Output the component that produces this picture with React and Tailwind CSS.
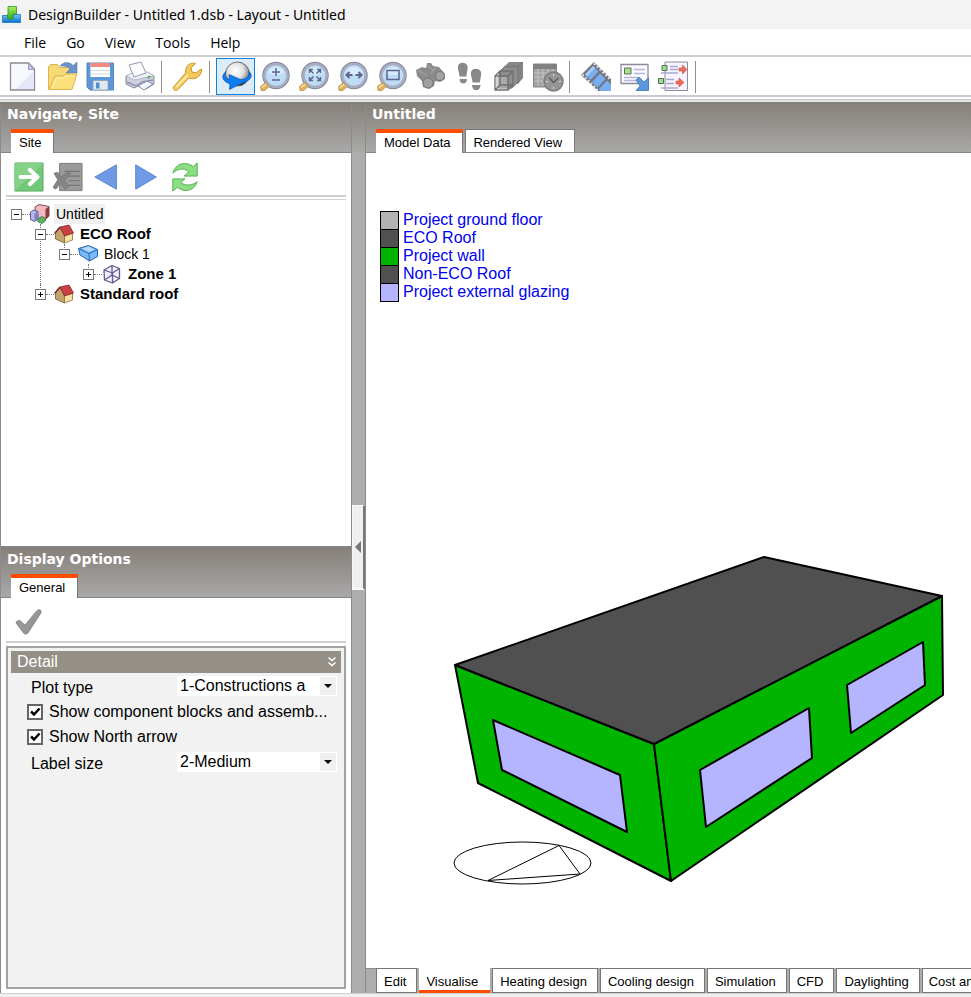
import { useState } from "react";

const sans = "font-['Liberation_Sans',Arial,sans-serif]";

export default function App() {
  return (
    <div className={`flex h-screen flex-col overflow-hidden bg-[#f0f0f0] text-black ${sans}`}>
      <TitleBar />
      <MenuBar />
      <Toolbar />
      <main className="flex min-h-0 flex-1">
        <aside className="flex w-[352px] shrink-0 flex-col border-x border-[#8c8c8c] bg-white">
          <NavigatePanel />
          <DisplayOptions />
        </aside>
        <Splitter />
        <ModelView />
      </main>
      <footer className="h-1 shrink-0 border-t border-[#d0d0d0] bg-[#f0f0f0]" />
    </div>
  );
}

function TitleBar() {
  return (
    <header className="flex h-[29px] shrink-0 items-center bg-[#f3f3f3] font-['Noto_Sans','Open_Sans',sans-serif]">
      <svg viewBox="0 0 20 18" className="ml-0.5 h-[18px] w-5">
        <defs>
          <linearGradient id="logoGreen" x1="0" y1="0" x2="0" y2="1">
            <stop offset="0" stopColor="#a5f05a" />
            <stop offset="1" stopColor="#35a91f" />
          </linearGradient>
          <linearGradient id="logoBlue" x1="0" y1="0" x2="0" y2="1">
            <stop offset="0" stopColor="#6fc8fb" />
            <stop offset="1" stopColor="#0a6fd0" />
          </linearGradient>
        </defs>
        <path d="M.5 9.500h7v3h4v-4h7v8H.5z" fill="url(#logoBlue)" stroke="#1675bd" strokeWidth=".8" />
        <path d="M6 .5h8.500v7.500H11v5H5.500V8.500H6z" fill="url(#logoGreen)" stroke="#35951f" strokeWidth=".8" />
      </svg>
      <h1 className="ml-1.5 whitespace-nowrap text-[14px] leading-5">DesignBuilder - Untitled 1.dsb - Layout - Untitled</h1>
    </header>
  );
}

function MenuBar() {
  const items = ["File", "Go", "View", "Tools", "Help"];
  return (
    <nav className="flex h-[26px] shrink-0 items-center gap-5 bg-white pl-6 pt-0.5 font-['Open_Sans','Noto_Sans',sans-serif] text-[14px] leading-5">
      {items.map((item) => (
        <button key={item} type="button">{item}</button>
      ))}
    </nav>
  );
}

function Toolbar() {
  return (
    <div className="shrink-0 border-t-2 border-[#cfcfd1] bg-white">
      <div className="flex h-10 items-center border-b-2 border-[#c9c9ce] pl-[3px] pt-px">
        <Tool label="New"><NewIcon /></Tool>
        <Tool label="Open"><OpenIcon /></Tool>
        <Tool label="Save"><SaveIcon /></Tool>
        <Tool label="Print"><PrintIcon /></Tool>
        <Separator />
        <Tool label="Options"><WrenchIcon /></Tool>
        <Separator />
        <Tool label="Orbit" active><OrbitIcon /></Tool>
        <Tool label="Zoom in and out">
          <Magnifier><path d="M17 7v8M13 11h8M13 19h8" /></Magnifier>
        </Tool>
        <Tool label="Fit view">
          <Magnifier><path d="M15.500 12.500l-4-4m0 3.500V8.500h3.500M18.500 12.500l4-4m-3.500 0h3.500V12M15.500 15.500l-4 4m0-3.500v3.500h3.500M18.500 15.500l4 4m-3.500 0h3.500V16" /></Magnifier>
        </Tool>
        <Tool label="Pan">
          <Magnifier><path d="M9.500 14h6M12.500 11l-3 3 3 3M24.500 14h-6M21.500 11l3 3-3 3" strokeWidth="2" /></Magnifier>
        </Tool>
        <Tool label="Zoom window">
          <Magnifier><path d="M11 9.500h12v9H11z" /></Magnifier>
        </Tool>
        <Tool label="Find"><BinocularsIcon /></Tool>
        <Tool label="Walk"><FeetIcon /></Tool>
        <Tool label="Blocks"><BlocksIcon /></Tool>
        <Tool label="Schedule"><ScheduleIcon /></Tool>
        <Separator />
        <Tool label="Movie"><FilmIcon /></Tool>
        <Tool label="Export"><ExportIcon /></Tool>
        <Tool label="Mapping"><MappingIcon /></Tool>
        <Separator />
      </div>
      <div className="mt-0.5 h-[3px] border-t border-[#c9c9ce] bg-[#e4e4e6]" />
    </div>
  );
}

function Tool({ label, active, children }) {
  return (
    <button
      type="button"
      aria-label={label}
      className={
        active
          ? "flex h-[37px] w-[39px] items-center justify-center border border-[#0a84e8] bg-[#dcebf8]"
          : "flex h-[37px] w-[39px] items-center justify-center"
      }
    >
      {children}
    </button>
  );
}

function Separator() {
  return <span className="ml-0.5 mr-1.5 h-8 w-px bg-[#8f8f8f]" />;
}

function Icon({ children }) {
  return <svg viewBox="0 0 32 32" className="h-8 w-8 shrink-0" fill="none">{children}</svg>;
}

function NewIcon() {
  return (
    <Icon>
      <path d="M3.500 2h18l6 6v21h-24z" fill="#f7f7fe" stroke="#8b8b93" strokeWidth="1.300" />
      <path d="M9 28L27 10v18z" fill="#e6e6fa" />
      <path d="M21.500 2l6 6.500h-6z" fill="#c3bdf0" stroke="#9b98b8" />
    </Icon>
  );
}

function OpenIcon() {
  return (
    <Icon>
      <path d="M2.500 28V6l2-2.500h7l2 3h10V14L8 28z" fill="#f7d978" stroke="#dfb347" />
      <path d="M14 5c4-5 10-4 13-.5L31 1v11H20l4-4c-3-3-6-3-10-3z" fill="#6b93c9" stroke="#587bb0" strokeWidth=".6" />
      <path d="M3 28.500L9 15h8l2-2h12l-5 15.500z" fill="#fbe07a" stroke="#dfb347" />
      <path d="M6 27l4-10h8l2-2h9" stroke="#fff2b5" />
    </Icon>
  );
}

function SaveIcon() {
  return (
    <Icon>
      <path d="M2 2h26.500v27H5l-3-3z" fill="#5c97da" stroke="#5a83b8" />
      <path d="M5.500 2h19.500v14H5.500z" fill="#fff" />
      <path d="M5.500 2h19.500v4H5.500z" fill="#f08a82" />
      <path d="M5.500 9.500h19.500M5.500 13h19.500" stroke="#d5d8de" />
      <path d="M8 19.500h15V29H8z" fill="#e3e8ef" stroke="#8799b3" strokeWidth=".7" />
      <path d="M11 21.500h3.500v6H11z" fill="#4f8cd0" />
    </Icon>
  );
}

function PrintIcon() {
  return (
    <Icon>
      <path d="M2 15l8-3h15l5 3v8l-8 5-8-3-4 2-8-4z" fill="#cfd0e2" stroke="#85869f" />
      <path d="M2 15l9 4 8-2 11-2-6-4H10z" fill="#f0f0f9" stroke="#a3a4ba" strokeWidth=".7" />
      <path d="M5 4l12-3 5 11-12 4z" fill="#fcfcff" stroke="#9697b0" />
      <path d="M3 21l9 4 6-4 11-2" stroke="#9293ab" strokeWidth="1.500" />
      <path d="M14 25l9-5 6 3-9 6z" fill="#f5f7ff" stroke="#7b8eb4" />
      <path d="M23 16l3-1.500 1 1.500-3 2z" fill="#55b655" />
    </Icon>
  );
}

function WrenchIcon() {
  return (
    <Icon>
      <path d="M1.500 26c-1 2 1.500 4.500 4 3L17 17c5 2 11 0 13-8l-1-1-5 4-4-1-1-4 4.500-4.500C19 1 13 4 13.500 12z" fill="#f6c95a" stroke="#cb962d" strokeLinejoin="round" />
      <path d="M4 26L16 14" stroke="#fde9a6" strokeWidth="2" />
    </Icon>
  );
}

function OrbitIcon() {
  return (
    <Icon>
      <defs>
        <radialGradient id="ball" cx=".42" cy=".36" r=".65">
          <stop offset="0" stopColor="#fff" />
          <stop offset=".5" stopColor="#e4e4e4" />
          <stop offset=".8" stopColor="#999" />
          <stop offset="1" stopColor="#222" />
        </radialGradient>
      </defs>
      <circle cx="17.500" cy="13" r="12" fill="url(#ball)" stroke="#555" strokeWidth=".8" />
      <path d="M6 10.500c-5 4-4.500 9.500 4 12.500l-.5 5.500L23 21.500c8-2 10.500-7 6-11 1.500 5-2.500 7.500-8.500 8L9 13.500l.5 5C5 17 3.500 14 6 10.500z" fill="#0c7df0" stroke="#0a57b0" strokeWidth=".7" />
    </Icon>
  );
}

function Magnifier({ children }) {
  return (
    <Icon>
      <circle cx="17" cy="14.500" r="13" fill="#bfdcf7" stroke="#83879b" strokeWidth="1.500" />
      <circle cx="17" cy="14.500" r="11.600" stroke="#a7adbf" strokeWidth="2.500" />
      <path d="M9 11a9 9 0 0 1 16 0c-4 4-12 4-16 0z" fill="#d7ebfd" />
      <path d="M1.500 25.500l5-4 4 3.500-4.500 4.500H2z" fill="#dfb162" stroke="#b28a43" strokeWidth=".7" />
      <path d="M3 26.500l4-3" stroke="#fbe3a3" strokeWidth="1.500" />
      <g stroke="#5e6690" strokeWidth="1.500">{children}</g>
    </Icon>
  );
}

function BinocularsIcon() {
  return (
    <Icon>
      <path d="M1 9l6-3 4 1 1-5h4l2 3 6 1 6 7v5l-5 3-5-1-1 5-5 3-6-2-1-6-5-5z" fill="#8a8a8a" />
      <path d="M3 9.500l9 5M12 4l7 6M20 7l-4 6" stroke="#9d9d9d" strokeWidth="1.500" />
      <circle cx="13" cy="22" r="5" fill="#a0a0a0" stroke="#767676" />
      <circle cx="25" cy="15" r="4.500" fill="#a2a2a2" stroke="#767676" />
    </Icon>
  );
}

function FeetIcon() {
  return (
    <Icon>
      <g fill="#888">
        <path d="M4 5c1-4.500 8-4.500 9.500 0 .5 4-1 7-1 10.500h-7C5.500 12 3.500 9 4 5zM5.500 18h7.500c0 6-7.500 6-7.500 0z" />
        <path d="M17 11c1-4.500 8.500-4.500 10 0 .5 4-1 7-1 10.500h-7.500c0-3.500-2-6.500-1.500-10.500zM18 24h8.500c0 7-8.500 7-8.500 0z" />
      </g>
    </Icon>
  );
}

function BlocksIcon() {
  return (
    <Icon>
      <path d="M11 6l5-5h14v16l-5 6H11z" fill="#858585" />
      <path d="M11 6h14v15M25 6l5-5" stroke="#707070" />
      <path d="M6 11l5-5h14v15l-6 6H6z" fill="#8e8e8e" stroke="#787878" />
      <path d="M3 16h11v12H3z" fill="#bdbdbd" fillOpacity=".6" />
      <path d="M2 15h13v14H2zM2 15l5-5h13v14l-5 5M15 15l5-5M7 10v14h13M7 24l-5 5" stroke="#707070" strokeWidth="1.300" />
    </Icon>
  );
}

function ScheduleIcon() {
  return (
    <Icon>
      <path d="M1.500 3h23v23h-23z" fill="#a3a3a3" stroke="#858585" />
      <path d="M2 3h22v5H2z" fill="#818181" />
      <path d="M2 12h22M2 16h22M2 20h22M6 8v17M11 8v17M16 8v17M21 8v17" stroke="#c3c3c3" />
      <circle cx="21.500" cy="20.500" r="9.500" fill="#969696" stroke="#7c7c7c" strokeWidth="1.500" />
      <path d="M17 16.500l4.500 5 5-4.500" stroke="#5c5c5c" strokeWidth="1.300" />
      <path d="M21.500 13v2M21.500 26v2M14 20.500h2M27 20.500h2" stroke="#ddd" />
    </Icon>
  );
}

function FilmIcon() {
  return (
    <Icon>
      <path d="M1 14L14 1l17 17v12H18z" fill="#72757f" />
      <path d="M5 13.500l8-8.500 5.500 5.500-8 8.500zM12 21l8-8.500 5.500 5.500-8 8.500zM19 28l8-8.500 4 4V30H21z" fill="#78aef0" />
      <path d="M5 13.500l8-8.500 2 2-8 8.500z" fill="#a9cbf8" />
      <path d="M2.500 13.500L18.500 30M14 2.500L31 19.500" stroke="#eee" strokeWidth="1.800" strokeDasharray="1.800 2.200" />
    </Icon>
  );
}

function ExportIcon() {
  return (
    <Icon>
      <path d="M2 3.500h27v19H2z" fill="#fbfbff" stroke="#8b8b9c" strokeWidth="1.300" />
      <path d="M5.500 7h6.500v6H5.500z" fill="#a5e28b" stroke="#5f6c61" />
      <path d="M15 8.500h11M15 12.500h11M5 16.500h14M5 19.500h12" stroke="#b8b5dc" strokeWidth="1.300" />
      <path d="M17 19l3-3 5 5 4.500-4.500V29.500H17l4-4.500z" fill="#5a97dc" stroke="#4272af" strokeWidth=".8" />
    </Icon>
  );
}

function MappingIcon() {
  return (
    <Icon>
      <path d="M7 1h22.500v28.500H7z" fill="#f5f4ff" stroke="#8c8c9e" />
      <path d="M12 5.500h8M12 8.500h8M3 12h17M8 18.500h8M8 22.500h8M3 27h17" stroke="#aaa8ce" strokeWidth="1.300" />
      <path d="M4 4.500h5v5H4zM.5 17.500h5v5h-5z" fill="#9edd8b" stroke="#55705a" />
      <path d="M21 7h3.500V4l4.500 4.500-4.500 4.500v-3H21zM18 20h3v-3l5 4.500-5 4.500v-3h-3z" fill="#ef6a5c" stroke="#c84b40" strokeWidth=".6" />
    </Icon>
  );
}

function PanelHeader({ title, children }) {
  return (
    <div className="flex h-[51px] shrink-0 flex-col justify-between border-b border-[#858585] bg-linear-to-b from-[#857f79] to-[#a9a9a8]">
      <h2 className="pl-1.5 pt-0.5 font-['DejaVu_Sans',Verdana,sans-serif] text-[14px] font-bold leading-5 text-white">{title}</h2>
      <div role="tablist" className="-mb-px flex items-end gap-0.5 pl-2.5">{children}</div>
    </div>
  );
}

function TopTab({ selected, children }) {
  return (
    <button
      type="button"
      role="tab"
      aria-selected={selected}
      className={
        selected
          ? "h-6 border-r border-t-4 border-r-[#777] border-t-[#ff4d00] bg-white pl-2 pr-3 text-[13px] leading-5"
          : "mb-px h-[23px] border border-b-0 border-[#777] bg-white pl-[7px] pr-3 pt-1 text-[13px] leading-[18px]"
      }
    >
      {children}
    </button>
  );
}

function NavigatePanel() {
  return (
    <section className="flex min-h-0 flex-1 flex-col">
      <PanelHeader title="Navigate, Site">
        <TopTab selected>Site</TopTab>
      </PanelHeader>
      <div className="mx-[5px] flex h-[44px] shrink-0 items-end border-b-2 border-[#cfcfd4] pb-0.5">
        <NavTool label="Go to">
          <path d="M1 1h30v30H1z" fill="#72c878" stroke="#5bab63" />
          <path d="M1 1h30L1 31z" fill="#93da95" fillOpacity=".6" />
          <path d="M7 16h17M17 8.500l8 7.500-8 7.500" stroke="#fff" strokeWidth="4.500" strokeLinecap="round" strokeLinejoin="round" />
        </NavTool>
        <NavTool label="Delete">
          <path d="M7 1.500h24v29H7z" fill="#9a9a9a" stroke="#7c7c7c" />
          <path d="M12 10h17M16 15h13M17 20h12M16 25h13" stroke="#757575" strokeWidth="1.300" />
          <path d="M1 12l4-1 4 5 6-5 4 1-7 8 5 6-4 3-5-6-5 6-3-2 5-8z" fill="#858585" stroke="#707070" strokeWidth=".7" />
        </NavTool>
        <NavTool label="Back"><path d="M26 3v26L3 16z" fill="#6f9be6" stroke="#5b83cc" /></NavTool>
        <NavTool label="Forward"><path d="M5 3v26l22-13z" fill="#6f9be6" stroke="#5b83cc" /></NavTool>
        <NavTool label="Refresh">
          <path d="M3 12C6 1 17-1 25 5l4-4v14H15l5-4.500C14 5 7 8 3 12z" fill="#8bdf82" stroke="#51ad50" />
          <path d="M29 21c-3 10-14 12-21 6l-5 4V18h13l-4.500 4C17 26 24 25 29 21z" fill="#8bdf82" stroke="#51ad50" />
        </NavTool>
      </div>
      <div className="mx-[5px] mt-0.5 h-px shrink-0 bg-[#cfcfd4]" />
      <ul className="min-h-0 flex-1 overflow-auto pl-2.5 pt-1 text-[14px] leading-5">
        <TreeItem label="Untitled" icon={<SiteIcon />} highlight last root>
          <TreeItem label="ECO Roof" icon={<HouseIcon />} bold>
            <TreeItem label="Block 1" icon={<BlockIcon />} last>
              <TreeItem label="Zone 1" icon={<ZoneIcon />} bold closed last />
            </TreeItem>
          </TreeItem>
          <TreeItem label="Standard roof" icon={<HouseIcon />} bold closed last />
        </TreeItem>
      </ul>
    </section>
  );
}

function NavTool({ label, children }) {
  return (
    <button type="button" aria-label={label} className="flex h-8 w-[39px] items-center pl-2">
      <svg viewBox="0 0 32 32" className="h-[30px] w-[30px] shrink-0" fill="none">{children}</svg>
    </button>
  );
}

function TreeItem({ label, icon, bold, highlight, closed, last, root, children }) {
  const [open, setOpen] = useState(!closed);
  return (
    <li className="relative">
      {!root && (
        <span className={last ? "absolute left-[5px] top-0 h-2.5 border-l border-dotted border-[#777]" : "absolute left-[5px] top-0 h-full border-l border-dotted border-[#777]"} />
      )}
      <div className="relative flex h-5 items-center">
        <button
          type="button"
          aria-label={`Toggle ${label}`}
          aria-expanded={open}
          onClick={() => setOpen(!open)}
          className="h-[11px] w-[11px] border border-[#777] bg-white"
        >
          <svg viewBox="0 0 9 9" className="h-[9px] w-[9px]" stroke="#000">
            <path d={open ? "M2 4.500h5" : "M2 4.500h5M4.500 2v5"} />
          </svg>
        </button>
        <span className="w-2 border-t border-dotted border-[#777]" />
        {icon}
        <span
          className={
            bold
              ? "ml-1.5 text-[15px] font-bold"
              : highlight
                ? "ml-1 bg-[#f0f0f0] px-0.5"
                : "ml-1.5"
          }
        >
          {label}
        </span>
      </div>
      {open && children && <ul className="pl-6">{children}</ul>}
    </li>
  );
}

function SiteIcon() {
  return (
    <svg viewBox="0 0 20 20" className="h-5 w-5" fill="none">
      <path d="M5 3l4-2.500 10 2V12l-4 4-9-2z" fill="#f2b9bc" stroke="#7d4a50" />
      <path d="M15.500 5L19 2.500V12l-3.500 4z" fill="#8c3d42" />
      <path d="M.5 8l3-2 4.500 1.500v8l-3.500 2-4-2z" fill="#b6b8ee" stroke="#565a91" />
      <path d="M4.500 9.500L8 7.500v8l-3.500 2z" fill="#7d80c4" />
      <path d="M8 14.500l4-2 3.500 1.500v3L12 19.500 8 18z" fill="#5cae63" stroke="#38793f" strokeWidth=".7" />
    </svg>
  );
}

function HouseIcon() {
  return (
    <svg viewBox="0 0 20 20" className="h-5 w-5" fill="none">
      <path d="M1.500 9L6 4l4.500 7v8l-9-4z" fill="#c5a36c" stroke="#6f5a3a" strokeWidth=".8" />
      <path d="M10.500 11l8-2v7l-8 3z" fill="#f8e0a0" stroke="#8d6e3d" strokeWidth=".8" />
      <path d="M6 3l9-2 4.500 8-9 3z" fill="#cc3f42" stroke="#7e282b" strokeWidth=".8" />
      <path d="M6 3L.5 9.500" stroke="#7e282b" strokeWidth="1.500" />
    </svg>
  );
}

function BlockIcon() {
  return (
    <svg viewBox="0 0 20 20" className="h-5 w-5" fill="#79b9f8" stroke="#2b65ad" strokeLinejoin="round">
      <path d="M.5 4.500l10-3 9 4v7l-8 4.500L2 11z" />
      <path d="M.5 4.500l10.500 5 8.500-4M11 9.500l.5 7.500" fill="none" />
      <path d="M4 4.500l6.500-2 6 3-5.500 2.500z" fill="#b5dcff" stroke="none" />
    </svg>
  );
}

function ZoneIcon() {
  return (
    <svg viewBox="0 0 20 20" className="h-5 w-5" fill="#f1f0ff" stroke="#5e5a8b" strokeWidth="1.300" strokeLinejoin="round">
      <path d="M2 6l8-4.500 7.500 3v10l-7 4.500-8-3z" />
      <path d="M2 6l8.500 3 7-4.500M10.500 9v10M10 1.500V11l-7.500 5M10 11l7.500 3.500" fill="none" />
    </svg>
  );
}

function DisplayOptions() {
  return (
    <section className="flex h-[447px] shrink-0 flex-col border-t border-[#858585]">
      <PanelHeader title="Display Options">
        <TopTab selected>General</TopTab>
      </PanelHeader>
      <div className="mx-[5px] flex h-[45px] shrink-0 items-end border-b-2 border-[#cdd0d2] pb-[5px]">
        <button type="button" aria-label="Apply" className="ml-[9px]">
          <svg viewBox="0 0 28 28" className="block h-7 w-7">
            <path d="M1 15l1-2 3-.5 5 4.500L21.500 3c2-2.500 6-1 4.500 2L13 25c-1 1.500-3.500 1.500-4.500 0z" fill="#969696" stroke="#808080" strokeWidth=".7" />
          </svg>
        </button>
      </div>
      <div className="mx-[5px] mb-1 mt-[3px] min-h-0 flex-1 border-2 border-[#a3a3a3] bg-[#f2f2f2] p-[3px] text-[16px] leading-5">
        <button type="button" className="flex h-[22px] w-full items-center justify-between bg-[#949088] pl-1.5 pr-1 text-white">
          <span>Detail</span>
          <svg viewBox="0 0 10 12" className="h-3 w-2.5" fill="none" stroke="#fff" strokeWidth="1.500">
            <path d="M1.500 1.500L5 4.500l3.500-3M1.500 6.500L5 9.500l3.500-3" />
          </svg>
        </button>
        <SelectRow id="plotType" label="Plot type" value="1-Constructions a" />
        <CheckRow id="components" label="Show component blocks and assemb..." />
        <CheckRow id="north" label="Show North arrow" />
        <SelectRow id="labelSize" label="Label size" value="2-Medium" />
      </div>
    </section>
  );
}

function SelectRow({ id, label, value }) {
  return (
    <div className="flex h-[26px] items-center pl-5 pr-1">
      <label htmlFor={id} className="w-[146px] pt-1">{label}</label>
      <div className="relative min-w-0 flex-1">
        <select id={id} className="block h-5 w-full appearance-none bg-white pl-[3px] pr-6 leading-5">
          <option>{value}</option>
        </select>
        <span className="pointer-events-none absolute right-px top-px flex h-[18px] w-4 items-center justify-center bg-[#f0f0f0]">
          <svg viewBox="0 0 8 4" className="h-1 w-2"><path d="M0 0h8L4 4z" /></svg>
        </span>
      </div>
    </div>
  );
}

function CheckRow({ id, label }) {
  return (
    <div className="flex h-[25px] items-center pl-4">
      <span className="relative h-4 w-4 shrink-0">
        <input id={id} type="checkbox" defaultChecked className="peer block h-4 w-4 appearance-none border-2 border-[#666] bg-white" />
        <svg viewBox="0 0 16 16" className="pointer-events-none absolute inset-0 hidden h-4 w-4 peer-checked:block" fill="none" stroke="#000" strokeWidth="2.500">
          <path d="M4 7.500l3 3 5.500-6" />
        </svg>
      </span>
      <label htmlFor={id} className="ml-1.5 whitespace-nowrap">{label}</label>
    </div>
  );
}

function Splitter() {
  return (
    <div className="flex w-[14px] shrink-0 flex-col justify-center border-r border-[#8c8c8c] bg-[linear-gradient(to_bottom,#857f79_0,#a9a9a8_50px,#adadad_50px)]">
      <button type="button" aria-label="Collapse panel" className="flex h-[85px] items-center justify-center border border-b-2 border-r-2 border-[#f8f8f8] border-r-[#777] bg-[#efefef]">
        <svg viewBox="0 0 6 12" className="h-3 w-1.5" fill="#777"><path d="M6 0v12L0 6z" /></svg>
      </button>
    </div>
  );
}

const legend = [
  { label: "Project ground floor", color: "bg-[#b3b3b3]" },
  { label: "ECO Roof", color: "bg-[#505050]" },
  { label: "Project wall", color: "bg-[#00b400]" },
  { label: "Non-ECO Roof", color: "bg-[#505050]" },
  { label: "Project external glazing", color: "bg-[#b4b4ff]" },
];

function ModelView() {
  return (
    <section className="flex min-w-0 flex-1 flex-col bg-white">
      <PanelHeader title="Untitled">
        <TopTab selected>Model Data</TopTab>
        <TopTab>Rendered View</TopTab>
      </PanelHeader>
      <div className="min-h-0 flex-1 overflow-hidden pl-3.5 pt-[58px]">
        <ul className="text-[16px] leading-[18px] text-[#0000f0]">
          {legend.map((item) => (
            <li key={item.label} className="flex h-[18px] items-center">
              <span className={`h-[19px] w-[19px] shrink-0 border border-black ${item.color}`} />
              <span className="ml-1">{item.label}</span>
            </li>
          ))}
        </ul>
        <Building />
      </div>
      <BottomTabs />
    </section>
  );
}

function Building() {
  return (
    <svg viewBox="452 555 494 331" className="ml-[72px] mt-[254px] h-[331px] w-[494px]" stroke="#000" strokeWidth="2" strokeLinejoin="round">
      <path d="M455 665L654 744L671 881L478 783z" fill="#00b400" />
      <path d="M654 744L942 596L943 695L671 881z" fill="#00b400" />
      <path d="M455 665L764 557L942 596L654 744z" fill="#505050" />
      <g fill="#b4b4ff">
        <path d="M493 720L620 775L627 832L502 770z" />
        <path d="M700 770L809 708L812 758L706 827z" />
        <path d="M847 685L923 642L925 685L851 733z" />
      </g>
      {/* north arrow */}
      <g fill="none" strokeWidth="1">
        <ellipse cx="522.500" cy="863" rx="68.500" ry="21" />
        <path d="M559 845.500L580 874L488 880.500z" />
      </g>
    </svg>
  );
}

function BottomTabs() {
  const tabs = ["Edit", "Visualise", "Heating design", "Cooling design", "Simulation", "CFD", "Daylighting", "Cost an"];
  return (
    <div className="flex h-[25px] shrink-0 overflow-hidden bg-[#adadad] text-[13px]">
      <div className="w-2.5 shrink-0 border-t border-[#8c8c8c]" />
      <div role="tablist" className="flex flex-1 gap-0.5">
        {tabs.map((tab, i) => (
          <button
            key={tab}
            type="button"
            role="tab"
            aria-selected={tab === "Visualise"}
            className={
              tab === "Visualise"
                ? "shrink-0 whitespace-nowrap border-b-[3px] border-[#ff4d00] bg-white pl-[7px] pr-3 pt-1"
                : i === tabs.length - 1
                  ? "flex-1 whitespace-nowrap border border-r-0 border-[#777] bg-white pl-1.5 pt-[3px] text-left"
                  : "shrink-0 whitespace-nowrap border border-[#777] bg-white pl-[7px] pr-2.5 pt-[3px]"
            }
          >
            {tab}
          </button>
        ))}
      </div>
    </div>
  );
}
